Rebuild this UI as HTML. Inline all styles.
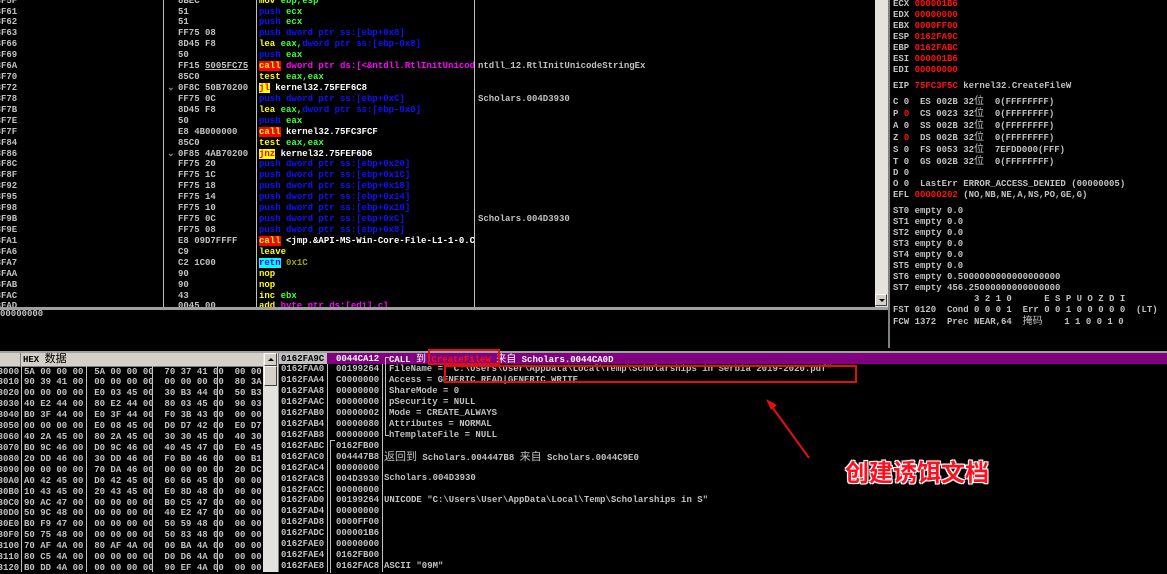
<!DOCTYPE html>
<html><head><meta charset="utf-8"><style>
*{margin:0;padding:0}
body{width:1167px;height:572px;background:#000;overflow:hidden;position:relative;font-family:"Liberation Mono","Noto Sans CJK SC",monospace;font-size:9px;font-weight:bold;color:#c0c0c0}
.a{position:absolute;white-space:pre;line-height:10.92px}
.vl{position:absolute;width:1px;background:#c0c0c0}
.p{color:#1010ff}.g{color:#40ff40}.y{color:#ffff00}.m{color:#ff00ff}.w{color:#fff}
.call{background:#ff0000;color:#ffff00}.jl{background:#ffff00;color:#ff0000}.rt{background:#00ffff;color:#0000ff}.ol{color:#a0a000}
.r{color:#ff1010}
.cj{font-family:"Noto Sans CJK SC",sans-serif;font-weight:normal;font-size:10px;line-height:8px}
</style></head><body>

<!-- disassembly -->
<div class="a" style="left:-26px;top:-4.4px">75FC3F5F
75FC3F61
75FC3F62
75FC3F63
75FC3F66
75FC3F69
75FC3F6A
75FC3F70
75FC3F72
75FC3F78
75FC3F7B
75FC3F7E
75FC3F7F
75FC3F84
75FC3F86
75FC3F8C
75FC3F8F
75FC3F92
75FC3F95
75FC3F98
75FC3F9B
75FC3F9E
75FC3FA1
75FC3FA6
75FC3FA7
75FC3FAA
75FC3FAB
75FC3FAC
75FC3FAD</div>
<div class="a" style="left:167px;top:83px;color:#888">⌄</div>
<div class="a" style="left:167px;top:148.5px;color:#888">⌄</div>
<div class="a" style="left:178px;top:-4.4px">8BEC
51
51
FF75 08
8D45 F8
50
FF15 <span style="text-decoration:underline">5005FC75</span>
85C0
0F8C 50B70200
FF75 0C
8D45 F8
50
E8 4B000000
85C0
0F85 4AB70200
FF75 20
FF75 1C
FF75 18
FF75 14
FF75 10
FF75 0C
FF75 08
E8 09D7FFFF
C9
C2 1C00
90
90
43
0045 00</div>
<div class="a" style="left:259px;top:-4.4px;width:215px;overflow:hidden"><span class="y">mov</span> <span class="g">ebp,esp</span>
<span class="p">push</span> <span class="g">ecx</span>
<span class="p">push</span> <span class="g">ecx</span>
<span class="p">push</span> <span class="p">dword ptr ss:[ebp+0x8]</span>
<span class="y">lea</span> <span class="g">eax,</span><span class="p">dword ptr ss:[ebp-0x8]</span>
<span class="p">push</span> <span class="g">eax</span>
<span class="call">call</span> <span class="m">dword ptr ds:[&lt;&amp;ntdll.RtlInitUnicodeStringEx&gt;]</span>
<span class="y">test</span> <span class="g">eax,eax</span>
<span class="jl">jl</span> <span class="w">kernel32.75FEF6C8</span>
<span class="p">push</span> <span class="p">dword ptr ss:[ebp+0xC]</span>
<span class="y">lea</span> <span class="g">eax,</span><span class="p">dword ptr ss:[ebp-0x8]</span>
<span class="p">push</span> <span class="g">eax</span>
<span class="call">call</span> <span class="w">kernel32.75FC3FCF</span>
<span class="y">test</span> <span class="g">eax,eax</span>
<span class="jl">jnz</span> <span class="w">kernel32.75FEF6D6</span>
<span class="p">push</span> <span class="p">dword ptr ss:[ebp+0x20]</span>
<span class="p">push</span> <span class="p">dword ptr ss:[ebp+0x1C]</span>
<span class="p">push</span> <span class="p">dword ptr ss:[ebp+0x18]</span>
<span class="p">push</span> <span class="p">dword ptr ss:[ebp+0x14]</span>
<span class="p">push</span> <span class="p">dword ptr ss:[ebp+0x10]</span>
<span class="p">push</span> <span class="p">dword ptr ss:[ebp+0xC]</span>
<span class="p">push</span> <span class="p">dword ptr ss:[ebp+0x8]</span>
<span class="call">call</span> <span class="w">&lt;jmp.&amp;API-MS-Win-Core-File-L1-1-0.CreateFileW&gt;</span>
<span class="y">leave</span>
<span class="rt">retn</span> <span class="ol">0x1C</span>
<span class="y">nop</span>
<span class="y">nop</span>
<span class="y">inc</span> <span class="g">ebx</span>
<span class="y">add</span> <span class="m">byte ptr ds:[edi],cl</span></div>
<div class="a" style="left:478px;top:61.1px">ntdll_12.RtlInitUnicodeStringEx</div>
<div class="a" style="left:478px;top:93.9px">Scholars.004D3930</div>
<div class="a" style="left:478px;top:214px">Scholars.004D3930</div>
<div class="vl" style="left:163px;top:0;height:307px"></div>
<div class="vl" style="left:256px;top:0;height:307px"></div>
<div class="vl" style="left:474px;top:0;height:307px"></div>
<!-- scrollbar -->
<div style="position:absolute;left:875px;top:0;width:13px;height:307px;background:#e4e2dc"></div>
<div style="position:absolute;left:875px;top:294px;width:12px;height:12px;background:#d4d0c8;border:1px solid #fff;border-right-color:#404040;border-bottom-color:#404040;box-sizing:border-box"><div style="position:absolute;left:3px;top:4px;border-left:3px solid transparent;border-right:3px solid transparent;border-top:3px solid #000"></div></div>
<div style="position:absolute;left:0;top:307px;width:888px;height:3px;background:#a0a0a0"></div>
<div class="a" style="left:0;top:309px">00000000</div>
<div style="position:absolute;left:888px;top:0;width:2px;height:348px;background:#808080"></div>

<!-- registers -->
<div class="a" style="left:893px;top:-1.5px;line-height:11px">ECX <span class="r">000001B6</span>
EDX <span class="r">00000000</span>
EBX <span class="r">0000FF00</span>
ESP <span class="r">0162FA9C</span>
EBP <span class="r">0162FABC</span>
ESI <span class="r">000001B6</span>
EDI <span class="r">00000000</span></div>
<div class="a" style="left:893px;top:80.5px;line-height:11px">EIP <span class="r">75FC3F5C</span> kernel32.CreateFileW</div>
<div class="a" style="left:893px;top:95.5px;line-height:11px">C 0  ES 002B 32<span class="cj">位</span>  0(FFFFFFFF)
P <span class="r">0</span>  CS 0023 32<span class="cj">位</span>  0(FFFFFFFF)
A 0  SS 002B 32<span class="cj">位</span>  0(FFFFFFFF)
Z <span class="r">0</span>  DS 002B 32<span class="cj">位</span>  0(FFFFFFFF)
S 0  FS 0053 32<span class="cj">位</span>  7EFDD000(FFF)
T 0  GS 002B 32<span class="cj">位</span>  0(FFFFFFFF)
D 0
O 0  LastErr ERROR_ACCESS_DENIED (00000005)</div>
<div class="a" style="left:893px;top:189.5px;line-height:11px">EFL <span class="r">00000202</span> (NO,NB,NE,A,NS,PO,GE,G)</div>
<div class="a" style="left:893px;top:205.5px;line-height:11px">ST0 empty 0.0
ST1 empty 0.0
ST2 empty 0.0
ST3 empty 0.0
ST4 empty 0.0
ST5 empty 0.0
ST6 empty 0.5000000000000000000
ST7 empty 456.25000000000000000
               3 2 1 0      E S P U O Z D I
FST 0120  Cond 0 0 0 1  Err 0 0 1 0 0 0 0 0  (LT)
FCW 1372  Prec NEAR,64  <span class="cj">掩码</span>    1 1 0 0 1 0</div>

<!-- bottom divider -->
<div style="position:absolute;left:0;top:351px;width:1167px;height:2px;background:#a0a0a0"></div>

<!-- dump -->
<div style="position:absolute;left:0;top:353px;width:263px;height:13px;background:#d4d0c8;border-bottom:1px solid #808080"></div>
<div style="position:absolute;left:20px;top:353px;width:1px;height:13px;background:#808080"></div>
<div class="a" style="left:23px;top:354px;color:#000">HEX <span class="cj" style="font-size:11px">数据</span></div>
<div class="a" style="left:-24px;top:366.5px;width:44px;overflow:hidden">004D3000
004D3010
004D3020
004D3030
004D3040
004D3050
004D3060
004D3070
004D3080
004D3090
004D30A0
004D30B0
004D30C0
004D30D0
004D30E0
004D30F0
004D3100
004D3110
004D3120</div>
<div class="a" style="left:24px;top:366.5px;width:239px;overflow:hidden">5A 00 00 00  5A 00 00 00  70 37 41 00  00 00 00 00
90 39 41 00  00 00 00 00  00 00 00 00  80 3A 41 00
00 00 00 00  E0 03 45 00  30 B3 44 00  50 B3 44 00
40 E2 44 00  80 E2 44 00  80 03 45 00  90 03 45 00
B0 3F 44 00  E0 3F 44 00  F0 3B 43 00  00 00 00 00
00 00 00 00  E0 08 45 00  D0 D7 42 00  E0 D7 42 00
40 2A 45 00  80 2A 45 00  30 30 45 00  40 30 45 00
B0 9C 46 00  D0 9C 46 00  40 45 47 00  E0 45 47 00
20 DD 46 00  30 DD 46 00  F0 B0 46 00  00 B1 46 00
00 00 00 00  70 DA 46 00  00 00 00 00  20 DC 46 00
A0 42 45 00  D0 42 45 00  60 66 45 00  00 00 00 00
10 43 45 00  20 43 45 00  E0 8D 48 00  00 00 00 00
90 AC 47 00  00 00 00 00  B0 C5 47 00  00 00 00 00
50 9C 48 00  00 00 00 00  40 E2 47 00  00 00 00 00
B0 F9 47 00  00 00 00 00  50 59 48 00  00 00 00 00
50 75 48 00  00 00 00 00  50 83 48 00  00 00 00 00
70 AF 4A 00  80 AF 4A 00  00 BA 4A 00  00 00 00 00
80 C5 4A 00  00 00 00 00  D0 D6 4A 00  00 00 00 00
B0 DD 4A 00  00 00 00 00  90 EF 4A 00  00 00 00 00</div>
<div class="vl" style="left:21px;top:366px;height:206px"></div>
<div class="vl" style="left:86px;top:366px;height:206px"></div>
<div class="vl" style="left:152px;top:366px;height:206px"></div>
<div class="vl" style="left:217px;top:366px;height:206px"></div>
<!-- dump scrollbar -->
<div style="position:absolute;left:263px;top:353px;width:15px;height:219px;background:#e4e2dc"></div>
<div style="position:absolute;left:264px;top:353px;width:13px;height:13px;background:#d4d0c8;border:1px solid #fff;border-right-color:#404040;border-bottom-color:#404040;box-sizing:border-box"><div style="position:absolute;left:3px;top:4px;border-left:3px solid transparent;border-right:3px solid transparent;border-bottom:3px solid #000"></div></div>
<div style="position:absolute;left:264px;top:366px;width:13px;height:20px;background:#d4d0c8;border:1px solid #fff;border-right-color:#404040;border-bottom-color:#404040;box-sizing:border-box"></div>

<!-- stack -->
<div style="position:absolute;left:278px;top:353px;width:49px;height:11px;background:#c0c0c0"></div>
<div style="position:absolute;left:327px;top:353px;width:840px;height:11px;background:#800080"></div>
<div class="a" style="left:281px;top:353.5px;color:#000">0162FA9C</div>
<div class="a" style="left:281px;top:364.4px">0162FAA0
0162FAA4
0162FAA8
0162FAAC
0162FAB0
0162FAB4
0162FAB8
0162FABC
0162FAC0
0162FAC4
0162FAC8
0162FACC
0162FAD0
0162FAD4
0162FAD8
0162FADC
0162FAE0
0162FAE4
0162FAE8</div>
<div class="a" style="left:336px;top:353.5px"><span class="w">0044CA12</span>
00199264
C0000000
00000000
00000000
00000002
00000080
00000000
0162FB00
004447B8
00000000
004D3930
00000000
00199264
00000000
0000FF00
000001B6
00000000
0162FB00
0162FAC8</div>
<div style="position:absolute;left:330px;top:440px;width:4px;height:132px;border-left:1px solid #c0c0c0;border-top:1px solid #c0c0c0"></div>
<div class="vl" style="left:278px;top:353px;height:219px;background:#808080"></div>
<div class="vl" style="left:327px;top:364px;height:208px"></div>
<div class="vl" style="left:382px;top:364px;height:208px"></div>
<div style="position:absolute;left:385px;top:357px;width:3px;height:77px;border-left:1px solid #c0c0c0;border-top:1px solid #c0c0c0;border-bottom:1px solid #c0c0c0"></div>
<div class="a" style="left:389px;top:353.5px"><span class="w">CALL <span class="cj">到</span> <span class="r">CreateFileW</span> <span class="cj">来自</span> Scholars.0044CA0D</span></div>
<div class="a" style="left:389px;top:364.4px">FileName = "C:\Users\User\AppData\Local\Temp\Scholarships in Serbia 2019-2020.pdf"
Access = GENERIC_READ|GENERIC_WRITE
ShareMode = 0
pSecurity = NULL
Mode = CREATE_ALWAYS
Attributes = NORMAL
hTemplateFile = NULL</div>
<div class="a" style="left:384px;top:451.5px"><span class="cj" style="font-size:11px">返回到</span> Scholars.004447B8 <span class="cj" style="font-size:11px">来自</span> Scholars.0044C9E0</div>
<div class="a" style="left:384px;top:473.3px">Scholars.004D3930</div>
<div class="a" style="left:384px;top:495.2px">UNICODE "C:\Users\User\AppData\Local\Temp\Scholarships in S"</div>
<div class="a" style="left:384px;top:560.7px">ASCII "09M"</div>

<!-- annotations -->
<div style="position:absolute;left:428px;top:349px;width:72px;height:16px;border:2px solid #e01010;box-sizing:border-box"></div>
<div style="position:absolute;left:444px;top:365px;width:413px;height:18px;border:2px solid #e01010;box-sizing:border-box"></div>
<svg style="position:absolute;left:0;top:0" width="1167" height="572"><line x1="809" y1="458" x2="770" y2="404" stroke="#e01010" stroke-width="2"/><polygon points="766,399 777,405 771,410" fill="#e01010"/></svg>
<div style="position:absolute;left:845px;top:456px;font-family:'Noto Sans CJK SC',sans-serif;font-size:24px;font-weight:bold;color:#ff1020;line-height:30px;text-shadow:0 0 2px #fff,0 0 2px #fff,1px 1px 0 #fff,-1px -1px 0 #fff,1px -1px 0 #fff,-1px 1px 0 #fff;white-space:nowrap">创建诱饵文档</div>
</body></html>
